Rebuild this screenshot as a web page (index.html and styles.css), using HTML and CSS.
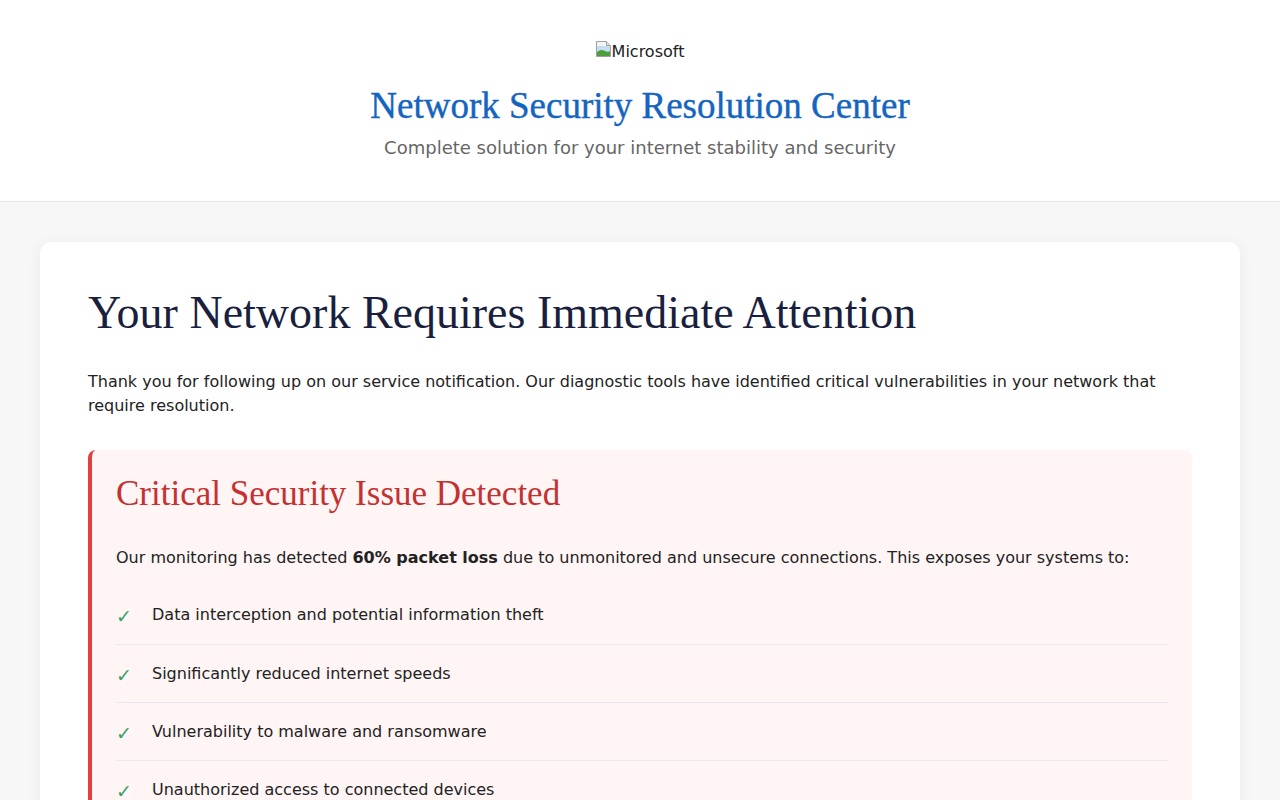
FILE: index.html
```html
<!DOCTYPE html>
<html lang="en">
<head>
  <meta charset="UTF-8">
  <meta name="viewport" content="width=device-width, initial-scale=1.0">
  <title>Network Security Resolution Center</title>
  <link rel="stylesheet" href="styles.css">
</head>
<body>
  <header class="site-header">
    <div class="logo">
      <svg class="logo-missing" width="16" height="16" viewBox="0 0 16 16" aria-hidden="true">
        <path d="M0.5 0.5h10l4 4v11h-14z" fill="#f4f4f4" stroke="#a0a0a0"/>
        <path d="M10.5 0.5v4h4" fill="#e0e0e0" stroke="#a0a0a0"/>
        <rect x="1" y="5" width="13" height="6" fill="#c4ddf4"/>
        <path d="M1 15V11c2.5-2.2 5-2.6 7.5-1.3 2 1 3.8 1.3 5.5 0.5V15z" fill="#4f9e3c"/>
      </svg><span>Microsoft</span>
    </div>
    <h1 class="site-title">Network Security Resolution Center</h1>
    <p class="site-tagline">Complete solution for your internet stability and security</p>
  </header>

  <main class="page">
    <section class="card">
      <h2 class="card-title">Your Network Requires Immediate Attention</h2>
      <p>Thank you for following up on our service notification. Our diagnostic tools have identified critical vulnerabilities in your network that require resolution.</p>

      <div class="alert">
        <h3 class="alert-title">Critical Security Issue Detected</h3>
        <p>Our monitoring has detected <strong>60% packet loss</strong> due to unmonitored and unsecure connections. This exposes your systems to:</p>
        <ul class="risk-list">
          <li><span class="check">✓</span>Data interception and potential information theft</li>
          <li><span class="check">✓</span>Significantly reduced internet speeds</li>
          <li><span class="check">✓</span>Vulnerability to malware and ransomware</li>
          <li><span class="check">✓</span>Unauthorized access to connected devices</li>
        </ul>
      </div>
    </section>
  </main>
</body>
</html>
```

FILE: styles.css
```css
body {
  margin: 0;
  font-family: "DejaVu Sans", sans-serif;
  font-size: 16px;
  line-height: 1.5;
  color: #222;
  background: #f7f7f7;
}
.site-header {
  background: #fff;
  border-bottom: 1px solid #e5e5e5;
  text-align: center;
  padding: 40px 20px 40px;
}
.logo {
  display: flex;
  justify-content: center;
  align-items: center;
  height: 24px;
  font-size: 16px;
  color: #222;
}
.logo-missing {
  display: block;
  margin-bottom: 7px;
}
.site-title {
  font-family: "Liberation Serif", serif;
  font-weight: normal;
  font-size: 37px;
  line-height: 1.2;
  color: #1565c0;
  margin: 20px 0 6px;
  -webkit-text-stroke: 0.4px #1565c0;
}
.site-tagline {
  font-size: 18px;
  color: #666;
  margin: 0;
}
.page {
  padding: 40px;
}
.card {
  background: #fff;
  border-radius: 12px;
  box-shadow: 0 2px 16px rgba(0,0,0,0.06);
  padding: 48px;
}
.card-title {
  font-family: "Liberation Serif", serif;
  font-weight: normal;
  font-size: 46px;
  line-height: 1;
  color: #1a1f3d;
  margin: 0 0 34px;
}
.card p {
  margin: 0 0 32px;
}
.alert {
  background: #fff5f5;
  border-left: 4px solid #e53e3e;
  border-radius: 8px;
  padding: 25px 24px 24px;
}
.alert-title {
  font-family: "Liberation Serif", serif;
  font-weight: normal;
  font-size: 35px;
  line-height: 1.1;
  color: #c53030;
  margin: 0 0 32px;
}
.alert p {
  margin: 0 0 17px;
}
.risk-list {
  list-style: none;
  margin: 0;
  padding: 0;
}
.risk-list li {
  display: flex;
  padding: 16.6px 0;
  border-bottom: 1px solid #e8e8ee;
}
.risk-list li:last-child {
  border-bottom: none;
}
.check {
  width: 36px;
  flex-shrink: 0;
  color: #38a169;
  font-size: 19px;
  line-height: 21px;
  padding-top: 3px;
}
```
